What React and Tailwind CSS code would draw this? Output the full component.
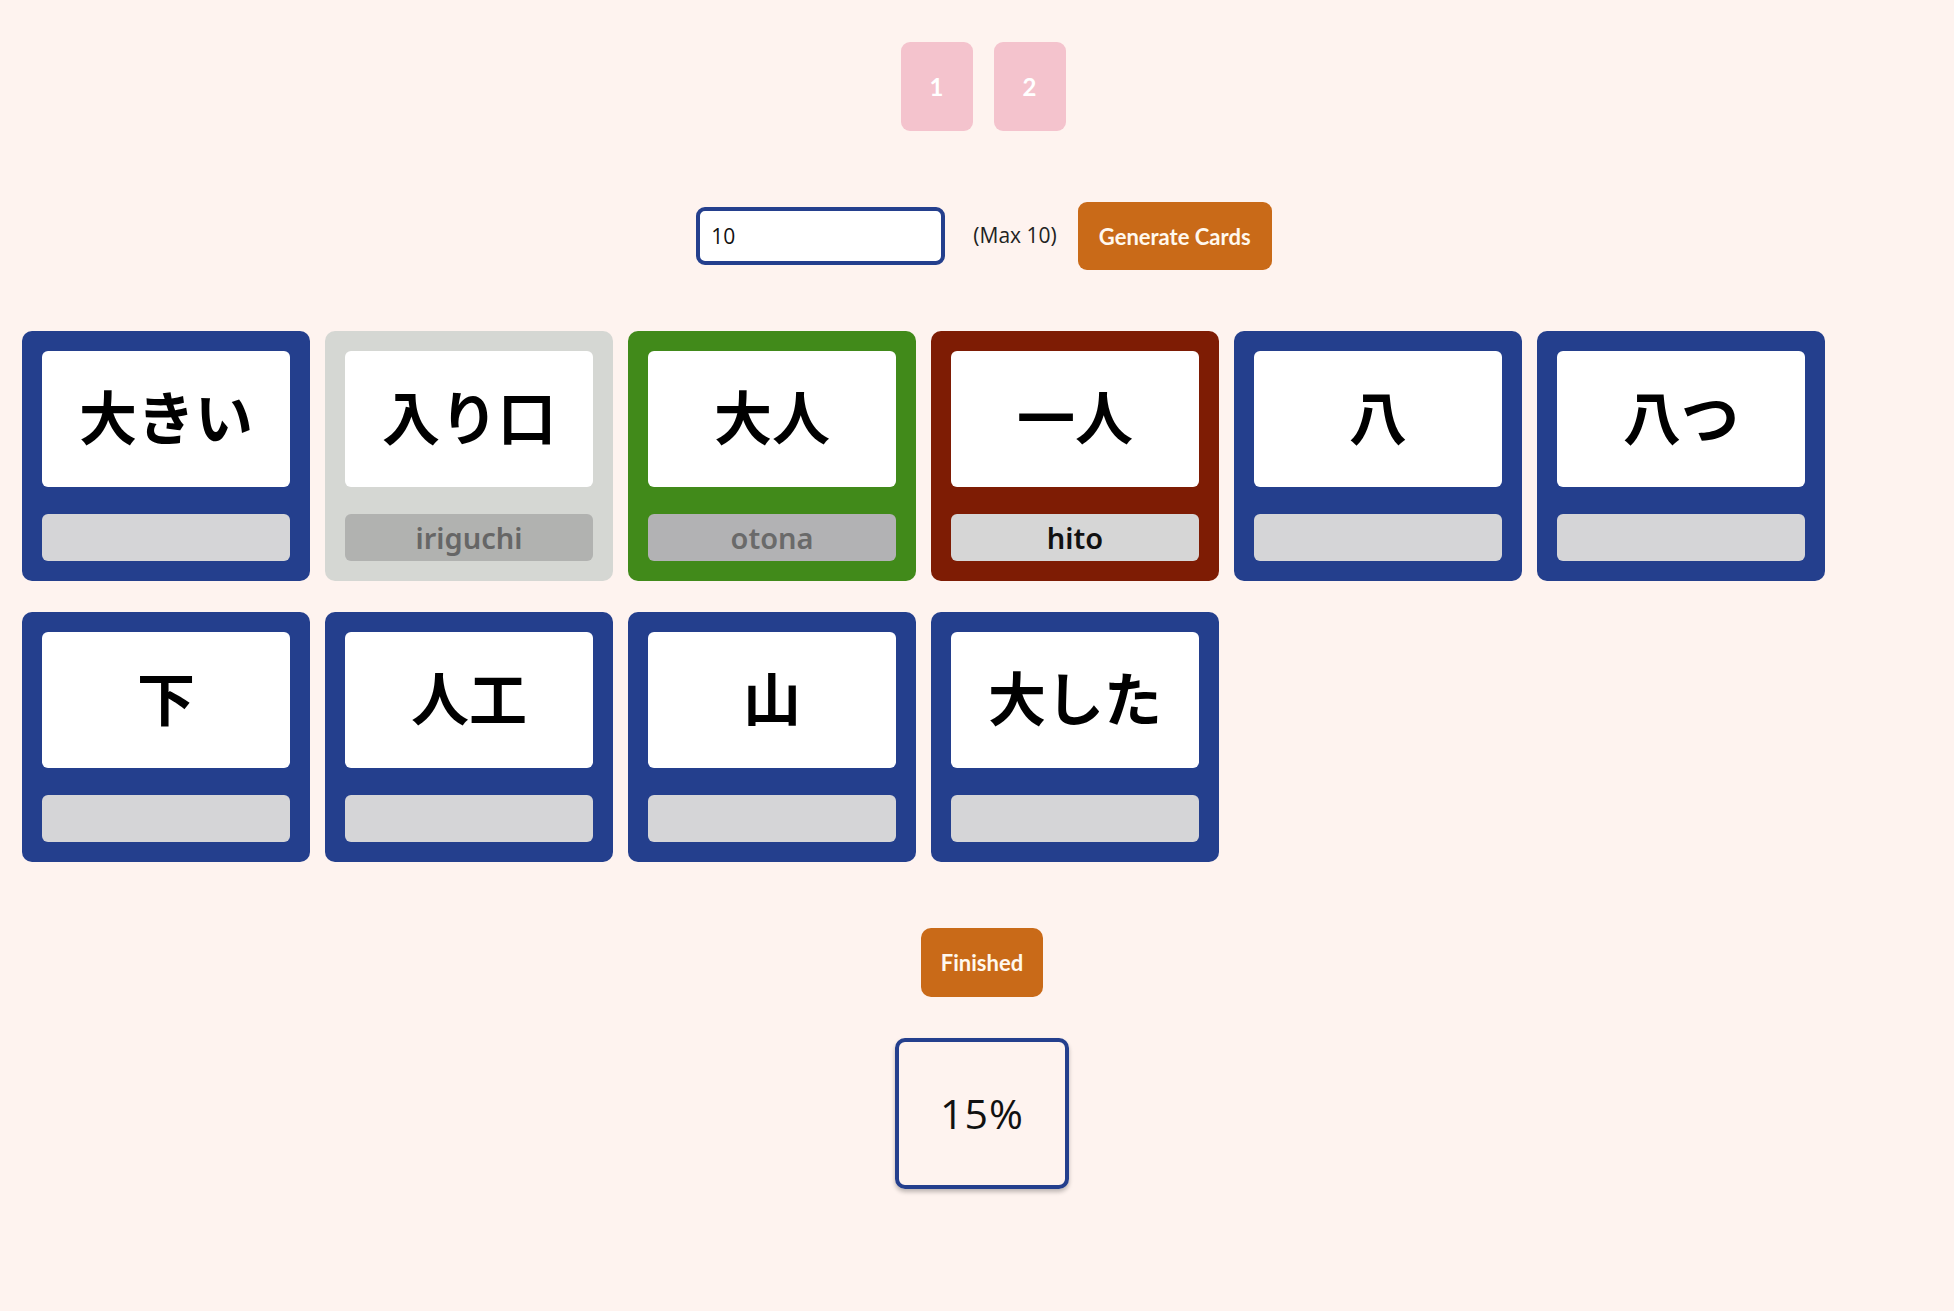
import React, { useState } from "react";

const cards = [
  { kanji: "大きい", romaji: "", state: "idle" },
  { kanji: "入り口", romaji: "iriguchi", state: "skipped" },
  { kanji: "大人", romaji: "otona", state: "correct" },
  { kanji: "一人", romaji: "hito", state: "wrong" },
  { kanji: "八", romaji: "", state: "idle" },
  { kanji: "八つ", romaji: "", state: "idle" },
  { kanji: "下", romaji: "", state: "idle" },
  { kanji: "人工", romaji: "", state: "idle" },
  { kanji: "山", romaji: "", state: "idle" },
  { kanji: "大した", romaji: "", state: "idle" },
];

const styles = {
  idle: { card: "bg-[#243f8d]", bar: "bg-[#d5d5d7] text-[#111]" },
  skipped: { card: "bg-[#d5d7d3]", bar: "bg-[#b1b2b0] text-[#666666]" },
  correct: { card: "bg-[#418a1a]", bar: "bg-[#b2b2b4] text-[#6a6a6a]" },
  wrong: { card: "bg-[#7e1c04]", bar: "bg-[#d6d6d6] text-[#111]" },
};

const Card = ({ kanji, romaji, state }) => {
  const s = styles[state];
  return (
    <div className={`w-[288px] h-[250px] rounded-[10px] p-[20px] flex flex-col ${s.card}`}>
      <div className="h-[136px] rounded-[6px] bg-white flex items-center justify-center pb-[8px]">
        <span className="text-[58px] font-bold text-black leading-none font-['Noto_Sans_CJK_JP',sans-serif]">
          {kanji}
        </span>
      </div>
      <div
        className={`mt-[27px] h-[47px] rounded-[6px] flex items-center justify-center text-[29px] font-semibold leading-none font-['Noto_Sans','Noto_Sans_CJK_JP',sans-serif] ${s.bar}`}
      >
        {romaji}
      </div>
    </div>
  );
};

export default function App() {
  const [count, setCount] = useState("10");

  return (
    <div className="w-[1954px] h-[1311px] bg-[#fef3ef] font-['Open_Sans',sans-serif] overflow-hidden">
      {/* pages */}
      <div className="flex justify-center gap-[21px] pt-[42px] pl-[12px]">
        {["1", "2"].map((p) => (
          <button
            key={p}
            className="w-[72px] h-[89px] rounded-[9px] bg-[#f4c3cd] text-white text-[24px] font-bold font-['Lato',sans-serif]"
          >
            {p}
          </button>
        ))}
      </div>

      {/* controls */}
      <div className="flex justify-center items-center mt-[71px] pl-[14px]">
        <input
          value={count}
          onChange={(e) => setCount(e.target.value)}
          className="w-[249px] h-[58px] border-[4px] border-[#243f8d] rounded-[9px] bg-white px-[11px] text-[21px] text-[#111] outline-none"
        />
        <span className="ml-[28px] text-[21px] text-[#222]">(Max 10)</span>
        <button className="ml-[21px] w-[194px] h-[68px] rounded-[9px] bg-[#c96a18] text-[#fff8ee] text-[22px] font-bold font-['Lato',sans-serif]">
          Generate Cards
        </button>
      </div>

      {/* cards */}
      <div className="flex flex-wrap gap-x-[15px] gap-y-[31px] mt-[61px] pl-[22px]">
        {cards.map((c, i) => (
          <Card key={i} {...c} />
        ))}
      </div>

      {/* finish */}
      <div className="flex flex-col items-center mt-[66px] pl-[10px]">
        <button className="w-[122px] h-[69px] rounded-[10px] bg-[#c96a18] text-[#fff8ee] text-[22px] font-bold font-['Lato',sans-serif]">
          Finished
        </button>
        <div className="mt-[41px] w-[174px] h-[151px] border-[4px] border-[#243f8d] rounded-[10px] shadow-[0_3px_4px_rgba(0,0,0,0.25)] flex items-center justify-center">
          <span className="text-[41px] text-[#111] tracking-[1px]">15%</span>
        </div>
      </div>
    </div>
  );
}
